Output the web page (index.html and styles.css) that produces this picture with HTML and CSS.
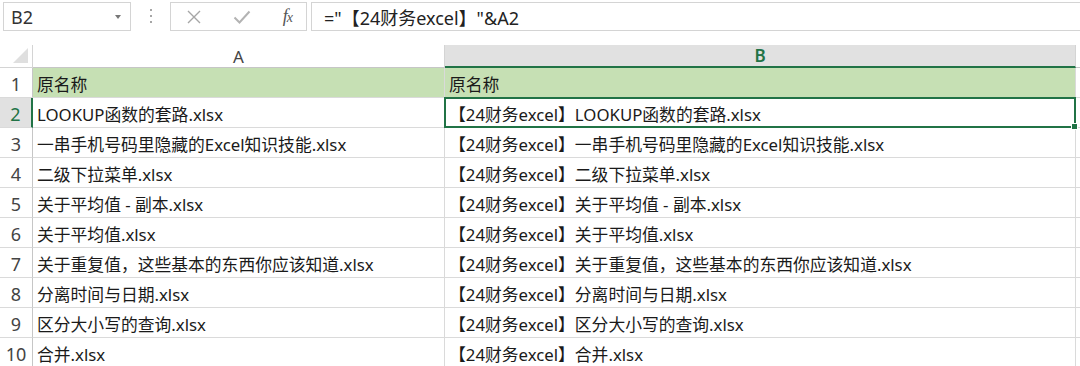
FILE: index.html
```html
<!DOCTYPE html>
<html lang="zh-CN">
<head>
    <meta charset="UTF-8">
    <meta name="viewport" content="width=device-width, initial-scale=1.0">
    <title>Sheet1</title>
    <link rel="stylesheet" href="styles.css">
</head>
<body>
    <div class="formula-bar">
        <div class="name-box">
            <span>B2</span>
            <span class="caret"></span>
        </div>
        <div class="grip">
            <span></span><span></span><span></span>
        </div>
        <div class="buttons">
            <svg class="btn" width="16" height="16" viewBox="0 0 16 16">
                <path d="M2 2 L14 14 M14 2 L2 14" stroke="#a6a6a6" stroke-width="1.4" fill="none"/>
            </svg>
            <svg class="btn" width="18" height="16" viewBox="0 0 18 16">
                <path d="M1.5 8.5 L6.5 13.5 L16.5 2.5" stroke="#b3b3b3" stroke-width="2" fill="none"/>
            </svg>
            <span class="fx">f<i>x</i></span>
        </div>
        <div class="formula">="【24财务excel】"&amp;A2</div>
    </div>

    <div class="sheet">
        <div class="corner"></div>
        <div class="col-head">A</div>
        <div class="col-head selected">B</div>
        <div class="col-head rest"></div>

        <div class="row-head">1</div>
        <div class="cell header-fill">原名称</div>
        <div class="cell header-fill">原名称</div>
        <div class="cell rest"></div>

        <div class="row-head selected">2</div>
        <div class="cell">LOOKUP函数的套路.xlsx</div>
        <div class="cell active">【24财务excel】LOOKUP函数的套路.xlsx</div>
        <div class="cell rest"></div>

        <div class="row-head">3</div>
        <div class="cell">一串手机号码里隐藏的Excel知识技能.xlsx</div>
        <div class="cell">【24财务excel】一串手机号码里隐藏的Excel知识技能.xlsx</div>
        <div class="cell rest"></div>

        <div class="row-head">4</div>
        <div class="cell">二级下拉菜单.xlsx</div>
        <div class="cell">【24财务excel】二级下拉菜单.xlsx</div>
        <div class="cell rest"></div>

        <div class="row-head">5</div>
        <div class="cell">关于平均值 - 副本.xlsx</div>
        <div class="cell">【24财务excel】关于平均值 - 副本.xlsx</div>
        <div class="cell rest"></div>

        <div class="row-head">6</div>
        <div class="cell">关于平均值.xlsx</div>
        <div class="cell">【24财务excel】关于平均值.xlsx</div>
        <div class="cell rest"></div>

        <div class="row-head">7</div>
        <div class="cell">关于重复值，这些基本的东西你应该知道.xlsx</div>
        <div class="cell">【24财务excel】关于重复值，这些基本的东西你应该知道.xlsx</div>
        <div class="cell rest"></div>

        <div class="row-head">8</div>
        <div class="cell">分离时间与日期.xlsx</div>
        <div class="cell">【24财务excel】分离时间与日期.xlsx</div>
        <div class="cell rest"></div>

        <div class="row-head">9</div>
        <div class="cell">区分大小写的查询.xlsx</div>
        <div class="cell">【24财务excel】区分大小写的查询.xlsx</div>
        <div class="cell rest"></div>

        <div class="row-head">10</div>
        <div class="cell">合并.xlsx</div>
        <div class="cell">【24财务excel】合并.xlsx</div>
        <div class="cell rest"></div>
    </div>
</body>
</html>
```

FILE: styles.css
```css
body {
    margin: 0;
    background-color: #fff;
    font-family: "Noto Sans", "Noto Sans CJK SC", sans-serif;
    color: #1a1a1a;
    overflow: hidden;
}

/* formula bar */
.formula-bar {
    display: flex;
    height: 32px;
    padding: 2px 0 0 3px;
    box-sizing: border-box;
}
.name-box {
    width: 128px;
    height: 29px;
    box-sizing: border-box;
    border: 1px solid #d4d4d4;
    display: flex;
    align-items: center;
    justify-content: space-between;
    padding: 0 9px 0 7px;
    font-size: 18px;
    color: #333;
}
.caret {
    width: 0;
    height: 0;
    border-left: 3px solid transparent;
    border-right: 3px solid transparent;
    border-top: 4px solid #777;
}
.grip {
    width: 39px;
    display: flex;
    flex-direction: column;
    align-items: center;
    justify-content: center;
    gap: 4px;
    padding-bottom: 2px;
}
.grip span {
    width: 2px;
    height: 2px;
    background-color: #a6a6a6;
}
.buttons {
    width: 137px;
    height: 29px;
    box-sizing: border-box;
    border: 1px solid #d4d4d4;
    display: flex;
    align-items: center;
    justify-content: space-between;
    padding: 0 14px 0 15px;
}
.fx {
    font-family: "Liberation Serif", "DejaVu Serif", serif;
    font-style: italic;
    font-size: 18px;
    color: #555;
    letter-spacing: -1px;
}
.fx i {
    font-size: 14px;
}
.formula {
    flex: 1;
    margin-left: 4px;
    height: 29px;
    box-sizing: border-box;
    border: 1px solid #d4d4d4;
    border-right: none;
    padding: 0 0 0 12px;
    display: flex;
    align-items: center;
    font-size: 18px;
    color: #222;
}

/* grid */
.sheet {
    margin-top: 13px;
    display: grid;
    grid-template-columns: 33px 412px 631px 4px;
    grid-template-rows: 23px repeat(10, 30px);
}
.corner {
    border-right: 1px solid #d4d4d4;
    border-bottom: 1px solid #d4d4d4;
    position: relative;
}
.corner::after {
    content: "";
    position: absolute;
    right: 4px;
    bottom: 4px;
    width: 0;
    height: 0;
    border-left: 15px solid transparent;
    border-bottom: 15px solid #dfdfdf;
}
.col-head {
    display: flex;
    align-items: center;
    justify-content: center;
    border-right: 1px solid #d4d4d4;
    border-bottom: 1px solid #c6c6c6;
    font-size: 17px;
    color: #444;
}
.col-head.selected {
    background-color: #e1e1e1;
    color: #217346;
    font-weight: 600;
    border-bottom: 2px solid #217346;
}
.col-head.rest {
    border-right: none;
}
.row-head {
    display: flex;
    align-items: center;
    justify-content: center;
    padding-top: 3px;
    box-sizing: border-box;
    border-right: 1px solid #c6c6c6;
    border-bottom: 1px solid #dadada;
    font-size: 18px;
    color: #444;
}
.row-head.selected {
    background-color: #e1e1e1;
    color: #217346;
    border-right: 2px solid #217346;
}
.cell {
    display: flex;
    align-items: center;
    padding: 2px 0 0 4px;
    box-sizing: border-box;
    border-right: 1px solid #dadada;
    border-bottom: 1px solid #dadada;
    font-size: 16.8px;
    white-space: nowrap;
    overflow: hidden;
    position: relative;
}
.cell.header-fill {
    background-color: #c6e0b4;
}
.cell.rest {
    border-right: none;
}
.cell.active {
    overflow: visible;
}
.cell.active::after {
    content: "";
    position: absolute;
    left: -1px;
    top: -1px;
    right: -1px;
    bottom: -1px;
    border: 2px solid #217346;
}
.cell.active::before {
    content: "";
    position: absolute;
    right: -3px;
    bottom: -3px;
    width: 5px;
    height: 5px;
    background-color: #217346;
    border: 1px solid #fff;
    z-index: 1;
}
```
